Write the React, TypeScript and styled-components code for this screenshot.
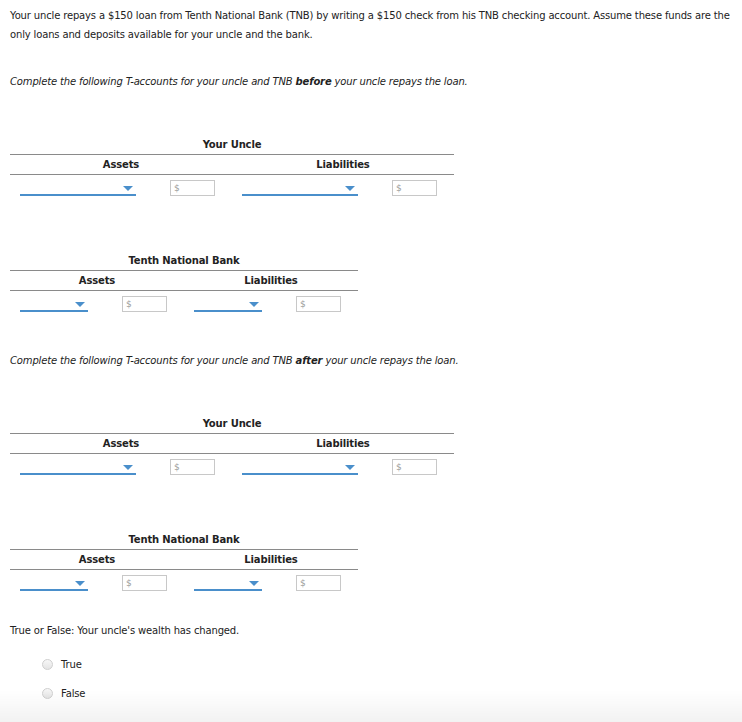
import styled, { createGlobalStyle } from "styled-components";

const GlobalStyle = createGlobalStyle`
  body {
    margin: 0;
    background: #fff;
    font-family: Verdana, "DejaVu Sans", sans-serif;
    font-size: 10px;
    letter-spacing: -0.15px;
    color: #222;
  }
  body::after {
    content: "";
    position: fixed;
    left: 0;
    right: 0;
    bottom: 0;
    height: 32px;
    pointer-events: none;
    background: linear-gradient(to bottom, rgba(0, 0, 0, 0), rgba(0, 0, 0, 0.05));
  }
`;

const StyledPage = styled.div`
  padding: 6px 10px 20px 10px;
  width: 722px;
`;

const StyledIntro = styled.p`
  margin: 0;
  line-height: 19px;
`;

const StyledInstruction = styled.p<{ $top: number }>`
  margin: ${(p) => p.$top}px 0 0 0;
  line-height: 19px;
  font-style: italic;
`;

const StyledAccount = styled.div<{ $width: number; $top: number }>`
  width: ${(p) => p.$width}px;
  margin-top: ${(p) => p.$top}px;
`;

const StyledAccountTitle = styled.div`
  text-align: center;
  font-weight: bold;
  line-height: 19px;
`;

const StyledHeader = styled.div`
  display: grid;
  grid-template-columns: 1fr 1fr;
  border-top: 1px solid #8a8a8a;
  border-bottom: 1px solid #8a8a8a;
  line-height: 19px;
  font-weight: bold;
  text-align: center;
`;

const StyledRow = styled.div`
  display: grid;
  grid-template-columns: 1fr 1fr;
  padding-top: 5px;
`;

const StyledCell = styled.div`
  display: flex;
  align-items: flex-end;
  gap: 34px;
  padding-left: 10px;
`;

const StyledSelect = styled.div<{ $width: number }>`
  position: relative;
  width: ${(p) => p.$width}px;
  height: 14px;
  border-bottom: 2px solid #4a8fcb;
`;

const StyledCaret = styled.span`
  position: absolute;
  right: 3px;
  bottom: 3px;
  width: 0;
  height: 0;
  border-left: 5px solid transparent;
  border-right: 5px solid transparent;
  border-top: 5px solid #4a8fcb;
`;

const StyledMoney = styled.div`
  box-sizing: border-box;
  width: 45px;
  height: 16px;
  border: 1px solid #c8c8c8;
  padding-left: 3px;
  font-size: 9px;
  line-height: 14px;
  color: #9a9a9a;
`;

const StyledQuestion = styled.p`
  margin: 30px 0 0 0;
  line-height: 19px;
`;

const StyledOptions = styled.div`
  display: flex;
  flex-direction: column;
  gap: 10px;
  margin-top: 15px;
  padding-left: 32px;
`;

const StyledOption = styled.label`
  display: flex;
  align-items: center;
  gap: 8px;
  line-height: 19px;
`;

const StyledRadio = styled.span`
  box-sizing: border-box;
  width: 11px;
  height: 11px;
  border-radius: 50%;
  border: 1px solid #cfcfcf;
  background: linear-gradient(to bottom, #f7f7f7, #e4e4e4);
`;

type AccountProps = {
  title: string;
  width: number;
  selectWidth: number;
  top: number;
};

const TAccount = ({ title, width, selectWidth, top }: AccountProps) => (
  <StyledAccount $width={width} $top={top}>
    <StyledAccountTitle>{title}</StyledAccountTitle>
    <StyledHeader>
      <div>Assets</div>
      <div>Liabilities</div>
    </StyledHeader>
    <StyledRow>
      {[0, 1].map((i) => (
        <StyledCell key={i}>
          <StyledSelect $width={selectWidth}>
            <StyledCaret />
          </StyledSelect>
          <StyledMoney>$</StyledMoney>
        </StyledCell>
      ))}
    </StyledRow>
  </StyledAccount>
);

export default function App() {
  return (
    <>
      <GlobalStyle />
      <StyledPage>
        <StyledIntro>
          Your uncle repays a $150 loan from Tenth National Bank (TNB) by writing a $150 check
          from his TNB checking account. Assume these funds are the only loans and deposits
          available for your uncle and the bank.
        </StyledIntro>

        <StyledInstruction $top={28}>
          Complete the following T-accounts for your uncle and TNB <b>before</b> your uncle
          repays the loan.
        </StyledInstruction>
        <TAccount title="Your Uncle" width={444} selectWidth={116} top={44} />
        <TAccount title="Tenth National Bank" width={348} selectWidth={68} top={55} />

        <StyledInstruction $top={39}>
          Complete the following T-accounts for your uncle and TNB <b>after</b> your uncle
          repays the loan.
        </StyledInstruction>
        <TAccount title="Your Uncle" width={444} selectWidth={116} top={44} />
        <TAccount title="Tenth National Bank" width={348} selectWidth={68} top={55} />

        <StyledQuestion>True or False: Your uncle's wealth has changed.</StyledQuestion>
        <StyledOptions>
          <StyledOption>
            <StyledRadio />
            True
          </StyledOption>
          <StyledOption>
            <StyledRadio />
            False
          </StyledOption>
        </StyledOptions>
      </StyledPage>
    </>
  );
}
